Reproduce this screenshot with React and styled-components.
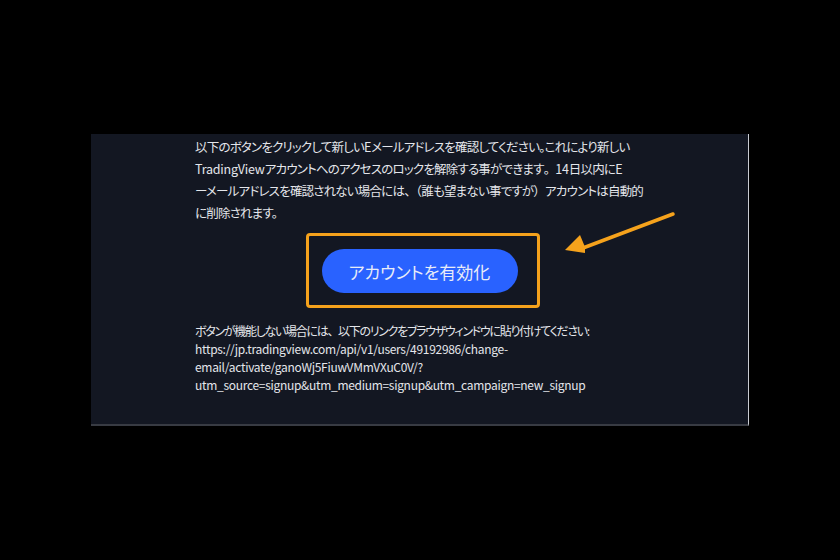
import React from 'react'
import styled, {createGlobalStyle} from 'styled-components';

const GlobalStyle = createGlobalStyle`
  html, body {
    margin: 0;
    padding: 0;
    background: #000;
  }
  body {
    font-family: "Noto Sans CJK JP", "Noto Sans", sans-serif;
  }
`;

export default function App() {
  return (
    <Page>
      <GlobalStyle />
      <Panel>
        <Intro>
          以下のボタンをクリックして新しい<Latin>E</Latin>メールアドレスを確認してください。これにより新しい<br />
          <Latin>TradingView</Latin>アカウントへのアクセスのロックを解除する事ができます<Wide>。</Wide><Latin>14</Latin>日以内に<Latin>E</Latin><br />
          ーメールアドレスを確認されない場合には<Wide>、（</Wide>誰も望まない事ですが<Wide>）</Wide>アカウントは自動的<br />
          に削除されます。
        </Intro>
        <ButtonRow>
          <Highlight>
            <ActivateButton>アカウントを有効化</ActivateButton>
          </Highlight>
        </ButtonRow>
        <Fallback>
          <Note>ボタンが機能しない場合には<Wide>、</Wide>以下のリンクをブラウザウィンドウに貼り付けてください:</Note><br />
          <Url>https://jp.tradingview.com/api/v1/users/49192986/change-<br />
          email/activate/ganoWj5FiuwVMmVXuC0V/?<br />
          utm_source=signup&amp;utm_medium=signup&amp;utm_campaign=new_signup</Url>
        </Fallback>
        <Arrow viewBox="0 0 120 50" width="120" height="50">
          <path d="M112 4 L22 38" stroke="#f5a21c" strokeWidth="3.5" strokeLinecap="round" />
          <path d="M4 40 L19 25 L24 37 L24 43 Z" fill="#f5a21c" />
        </Arrow>
      </Panel>
    </Page>
  );
}

const Page = styled.div`
  width: 840px;
  height: 560px;
  padding-top: 134px;
  box-sizing: border-box;
  background: #000;
`;

const Panel = styled.div`
  position: relative;
  margin-left: 91px;
  width: 658px;
  height: 292px;
  box-sizing: border-box;
  padding: 2px 0 0 104px;
  background: #131722;
  border-right: 1px solid #c9ccd2;
  border-bottom: 2px solid #383b43;
`;

const Intro = styled.p`
  margin: 0;
  font-size: 12.5px;
  line-height: 22px;
  letter-spacing: -0.8px;
  color: #e4e6eb;
  white-space: nowrap;
  font-feature-settings: "palt";
`;

const Latin = styled.span`
  letter-spacing: -0.2px;
`;

const Wide = styled.span`
  font-feature-settings: normal;
`;

const ButtonRow = styled.div`
  display: flex;
  justify-content: center;
  margin: 9px 0 0 -104px;
  padding-left: 6px;
`;

const Highlight = styled.div`
  display: flex;
  padding: 13px 19px 12px 13px;
  border: 3px solid #f5a21c;
  border-radius: 4px;
`;

const ActivateButton = styled.button`
  width: 196px;
  height: 44px;
  border: none;
  border-radius: 22px;
  background: #2962ff;
  color: #e8ecf7;
  font-family: "Noto Sans CJK JP", sans-serif;
  font-size: 17px;
  font-feature-settings: "palt";
  cursor: pointer;
`;

const Fallback = styled.p`
  margin: 14px 0 0;
  font-size: 12px;
  line-height: 18px;
  color: #e4e6eb;
  white-space: nowrap;
  font-feature-settings: "palt";
`;

const Note = styled.span`
  letter-spacing: -1.3px;
`;

const Url = styled.span`
  letter-spacing: -0.3px;
`;

const Arrow = styled.svg`
  position: absolute;
  left: 470px;
  top: 76px;
`;
